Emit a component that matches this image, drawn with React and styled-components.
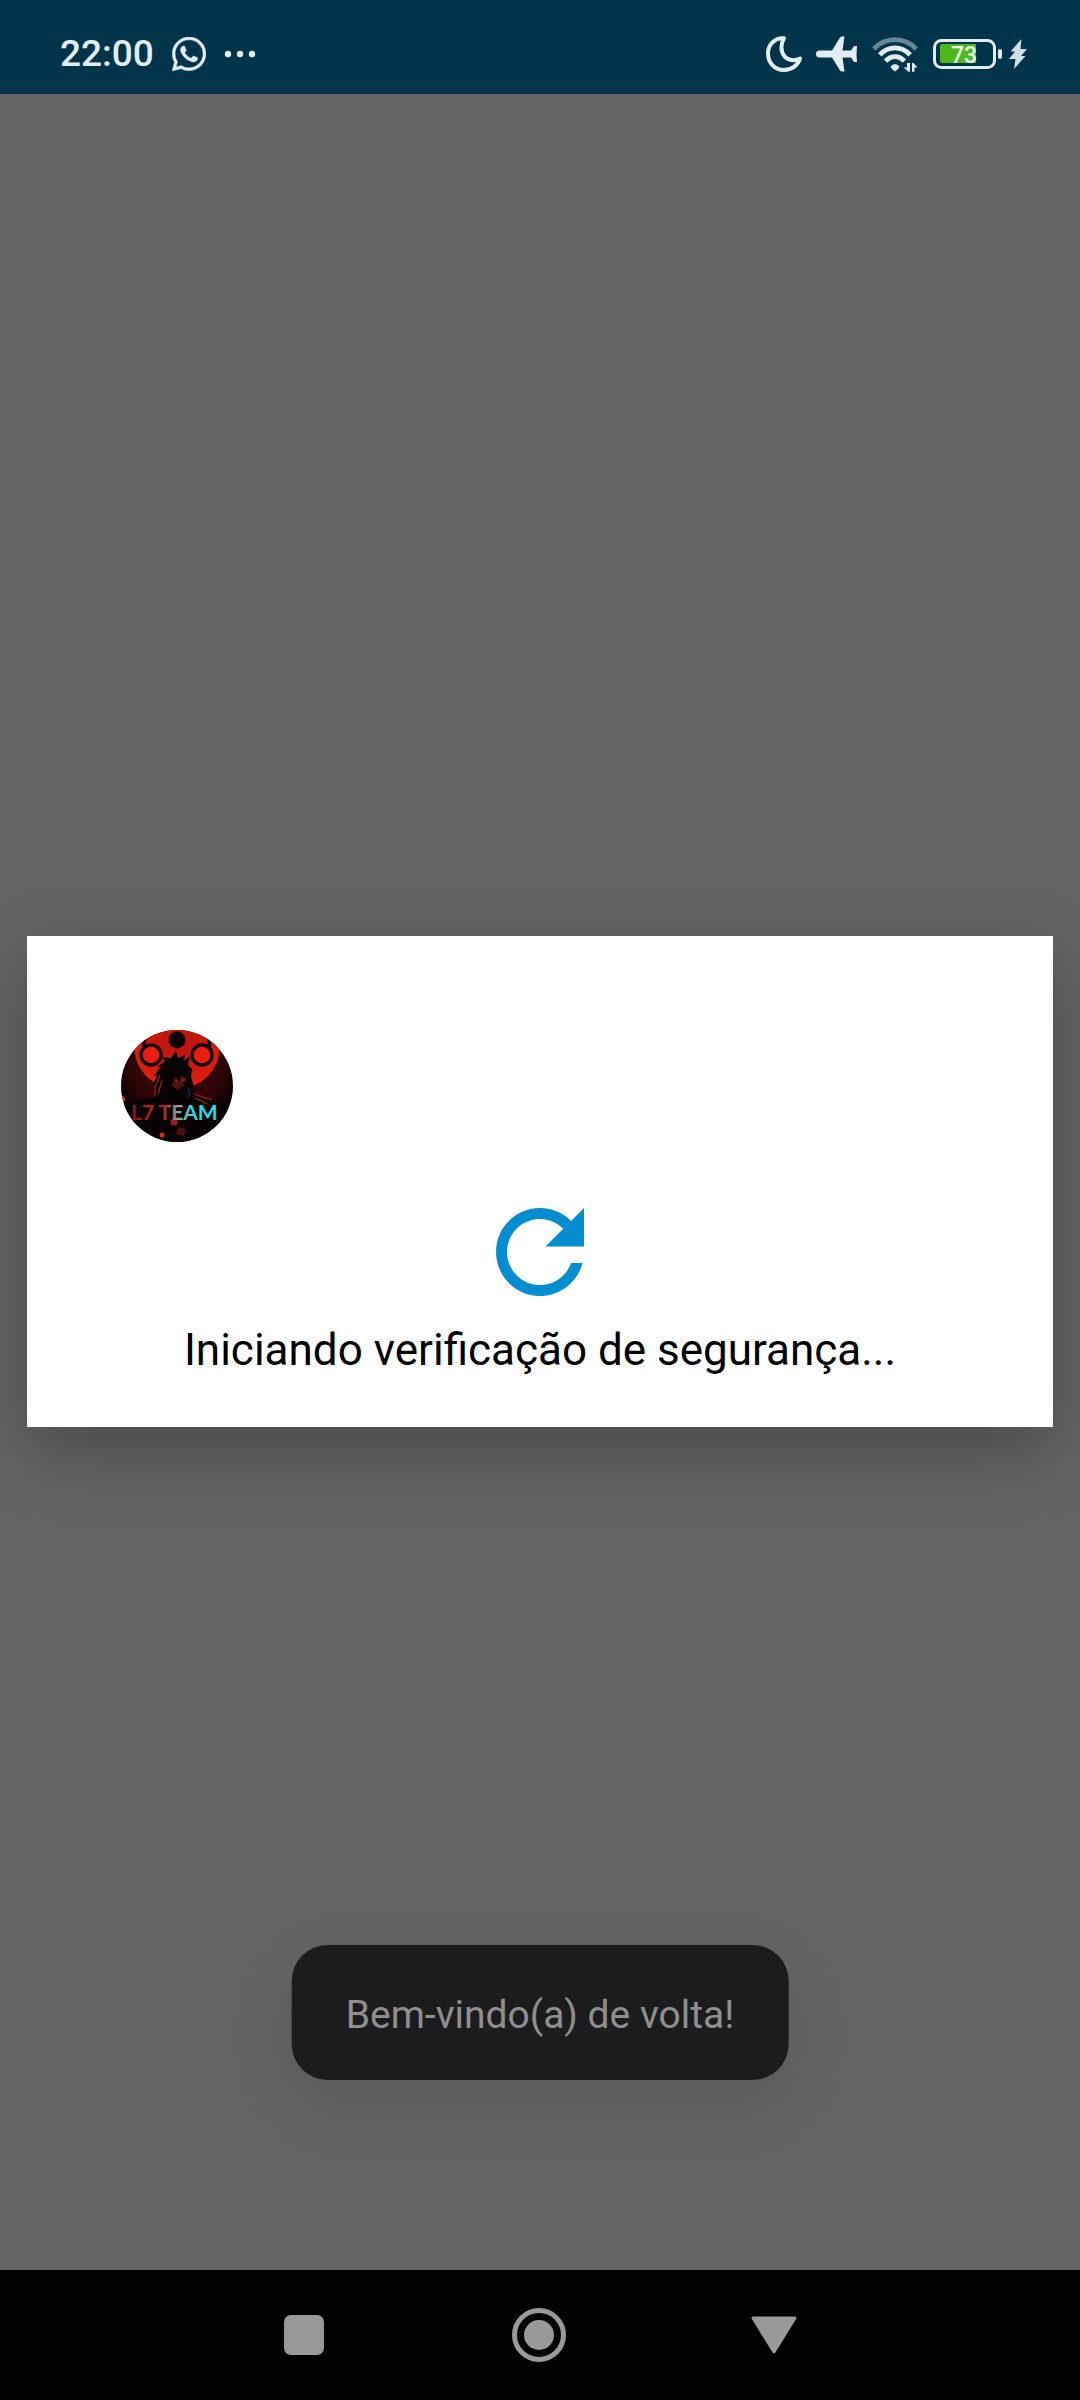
import React from "react";
import styled, { createGlobalStyle } from "styled-components";

const GlobalStyle = createGlobalStyle`
  *, *::before, *::after { box-sizing: border-box; }
  body { margin: 0; background: #646464; font-family: Roboto, "Noto Sans", sans-serif; }
`;

const Screen = styled.div`
  display: flex;
  flex-direction: column;
  min-height: 100vh;
  background: #646464;
`;

const StatusBar = styled.header`
  display: flex;
  justify-content: space-between;
  align-items: center;
  height: 94px;
  padding: 14px 53px 0 60px;
  background: #00344b;
  color: #e3edf3;
`;

const StatusGroup = styled.div`
  display: flex;
  align-items: center;
  gap: ${({ $gap }) => $gap}px;
`;

const Clock = styled.time`
  font-size: 37px;
  line-height: 44px;
  font-weight: 500;
`;

const Icon = styled.svg`
  display: block;
  flex: none;
  fill: currentColor;
`;

const BatteryGroup = styled.div`
  display: flex;
  align-items: center;
  gap: 7px;
  margin-left: 1px;
`;

const Main = styled.main`
  flex: 1;
  display: grid;
  grid-template-columns: minmax(0, 1fr);
  align-items: center;
  position: relative;
  padding: 0 27px 1px;
`;

const Dialog = styled.section`
  display: flex;
  flex-direction: column;
  padding: 94px 94px 51px;
  background: #fff;
  box-shadow: 0 24px 64px rgba(0, 0, 0, 0.26);
`;

const Avatar = styled.svg`
  display: block;
  width: 112px;
  height: 112px;
  border-radius: 50%;
`;

const Progress = styled.div`
  display: flex;
  flex-direction: column;
  align-items: center;
  gap: 6px;
  margin-top: 44px;
`;

const Message = styled.p`
  margin: 0;
  color: #000;
  font-size: 44px;
  line-height: 52px;
`;

const Toast = styled.div`
  position: absolute;
  left: 50%;
  bottom: 190px;
  transform: translateX(-50%);
  padding: 47px 54px 42px;
  border-radius: 36px;
  background: #1c1c1e;
  box-shadow: 0 24px 64px rgba(0, 0, 0, 0.1);
  color: #8f8f90;
  font-size: 39px;
  line-height: 46px;
  white-space: nowrap;
`;

const NavBar = styled.nav`
  display: flex;
  justify-content: center;
  height: 130px;
  padding-right: 2px;
  background: #000;
`;

const NavButton = styled.button`
  display: flex;
  align-items: center;
  justify-content: center;
  width: 235px;
  padding: 0;
  border: 0;
  background: none;
  color: #999;
`;

function WhatsApp() {
  return (
    <Icon width="34" height="34" viewBox="0 0 24 24" aria-label="WhatsApp">
      <path
        stroke="currentColor"
        strokeWidth=".3"
        d="M17.472 14.382c-.297-.149-1.758-.867-2.03-.967-.273-.099-.471-.148-.67.15-.197.297-.767.966-.94 1.164-.173.199-.347.223-.644.075-.297-.15-1.255-.463-2.39-1.475-.883-.788-1.48-1.761-1.653-2.059-.173-.297-.018-.458.13-.606.134-.133.298-.347.446-.52.149-.174.198-.298.298-.497.099-.198.05-.371-.025-.52-.075-.149-.669-1.612-.916-2.207-.242-.579-.487-.5-.669-.51-.173-.008-.371-.01-.57-.01-.198 0-.52.074-.792.372-.272.297-1.04 1.016-1.04 2.479 0 1.462 1.065 2.875 1.213 3.074.149.198 2.096 3.2 5.077 4.487.709.306 1.262.489 1.694.625.712.227 1.36.195 1.871.118.571-.085 1.758-.719 2.006-1.413.248-.694.248-1.289.173-1.413-.074-.124-.272-.198-.57-.347m-5.421 7.403h-.004a9.87 9.87 0 01-5.031-1.378l-.361-.214-3.741.982.998-3.648-.235-.374a9.86 9.86 0 01-1.51-5.26c.001-5.45 4.436-9.884 9.888-9.884 2.64 0 5.122 1.03 6.988 2.898a9.825 9.825 0 012.893 6.994c-.003 5.45-4.437 9.884-9.885 9.884m8.413-18.297A11.815 11.815 0 0012.05 0C5.495 0 .16 5.335.157 11.892c0 2.096.547 4.142 1.588 5.945L.057 24l6.305-1.654a11.882 11.882 0 005.683 1.448h.005c6.554 0 11.89-5.335 11.893-11.893a11.821 11.821 0 00-3.48-8.413z"
      />
    </Icon>
  );
}

function More() {
  return (
    <Icon width="32" height="8" viewBox="0 0 32 8" aria-label="Mais">
      <circle cx="4" cy="4" r="3.2" />
      <circle cx="16" cy="4" r="3.2" />
      <circle cx="28" cy="4" r="3.2" />
    </Icon>
  );
}

function Moon() {
  return (
    <Icon width="36" height="36" viewBox="0 0 36 36" aria-label="Modo noturno">
      <path
        d="M18 2.2C9.500 1.500 2 8 2 17.500C2 27 9 34 18 34C25.500 34 32 29.500 34 22.500C28.500 25.500 22 24.500 18.500 20.200C14.500 15.500 14.500 8 18 2.200Z"
        fill="none"
        stroke="currentColor"
        strokeWidth="4"
        strokeLinejoin="round"
      />
    </Icon>
  );
}

function Plane() {
  return (
    <Icon width="42" height="36" viewBox="0 0 42 36" aria-label="Modo avião">
      <path d="M3.500 14.500H16L24 1.500Q24.800.5 26 .5H28.500L26.500 14.500H35L38 10H41Q40 18 41 26H38L35 21.500H26.500L28.500 35.500H26Q24.800 35.500 24 34.500L16 21.500H3.500A3.500 3.500 0 0 1 3.500 14.500Z" />
    </Icon>
  );
}

function Wifi() {
  return (
    <Icon width="46" height="36" viewBox="0 0 46 36" aria-label="Wi-Fi">
      <g fill="none" stroke="currentColor" strokeWidth="4.800">
        <path d="M1.800 13C13.500 0.600 32.500 0.600 44.200 13" opacity=".45" />
        <path d="M7.800 18.800C16.500 9.600 29.500 9.600 38.200 18.800" />
        <path d="M13.600 25.200C19 19 27 19 32.400 25.200" />
      </g>
      <path d="M18.500 30.500Q23 25.500 27.500 30.500Q27 33 23 35.600Q19 33 18.500 30.500Z" />
      <path d="M35 27H38V35.800H36.500L31.500 31.500H35ZM40 35.800V27H41.500L45.500 31.500H42.500V35.800Z" />
    </Icon>
  );
}

function Battery() {
  return (
    <Icon width="69" height="30" viewBox="0 0 69 30" role="img" aria-label="Bateria 73%">
      <rect x="1.500" y="1.500" width="60" height="27" rx="7" fill="none" stroke="currentColor" strokeWidth="3" />
      <path d="M9 5H43V24H9Q7 24 7 22V7Q7 5 9 5Z" fill="#4cb81b" />
      <rect x="65" y="10" width="4" height="10" rx="2" />
      <text x="18" y="24" fontFamily="Roboto, sans-serif" fontSize="23" fontWeight="500" fill="#eef6e8">
        73
      </text>
    </Icon>
  );
}

function Bolt() {
  return (
    <Icon width="18" height="30" viewBox="0 0 18 30" aria-label="Carregando">
      <path d="M12.500 0L1.500 12.500H6L0 20H6.500L5 30L16.500 17H12L18 10H11.500Z" opacity=".92" />
    </Icon>
  );
}

function TeamAvatar() {
  return (
    <Avatar viewBox="0 0 112 112" role="img" aria-label="L7 TEAM">
      <defs>
        <radialGradient id="moonGlow" cx=".5" cy=".4" r=".6">
          <stop offset="0" stopColor="#b8140c" />
          <stop offset=".7" stopColor="#cf1a0e" />
          <stop offset="1" stopColor="#e0200f" />
        </radialGradient>
        <radialGradient id="backdrop" cx=".5" cy=".25" r=".6">
          <stop offset="0" stopColor="#500806" />
          <stop offset=".75" stopColor="#2a0404" />
          <stop offset="1" stopColor="#080204" />
        </radialGradient>
        <linearGradient id="teamInk" gradientUnits="userSpaceOnUse" x1="10" y1="0" x2="98" y2="0">
          <stop offset="0" stopColor="#7e1115" />
          <stop offset=".22" stopColor="#c11b1b" />
          <stop offset=".38" stopColor="#a92928" />
          <stop offset=".54" stopColor="#8ba3a3" />
          <stop offset=".7" stopColor="#2bd9e2" />
          <stop offset="1" stopColor="#14eaf2" />
        </linearGradient>
      </defs>
      <rect width="112" height="112" fill="url(#backdrop)" />
      <circle cx="56" cy="16" r="43" fill="url(#moonGlow)" />
      <g fill="none" stroke="#160304" strokeWidth="3.500">
        <circle cx="30" cy="25" r="10" fill="#ec1c0e" />
        <circle cx="81" cy="25" r="10" fill="#ec1c0e" />
        <path d="M23 17Q23 9 27 0M88 17Q90 8 83 1" />
      </g>
      <circle cx="56" cy="10" r="8.500" fill="#100304" />
      <path d="M33 68L35 54L31 57L36 45L33 46L40 36L36 37L44 31L41 27L50 28L55 21L57 28L64 25L63 31L69 26L67 35L71 39L70 47L74 60L73 65L88 72L112 78V112H0V75L30 68Z" fill="#080205" />
      <path d="M54 47L64 46L62 56L57 60L51 56Z" fill="#4b1213" />
      <path d="M53 50L58 49L56 52ZM61 49H64V51H60Z" fill="#a51a18" />
      <path d="M53 45L58 52L61 43L64 48L66 40L54 38Z" fill="#080205" />
      <path d="M34 66V57L39 45M37 64L41 50M73 64L91 70M74 68L86 74" fill="none" stroke="#a11a15" strokeWidth="1.300" />
      <path d="M67 58L69 64L66 68" fill="none" stroke="#24235e" strokeWidth="1.200" />
      <path d="M0 66Q5 66 4 71L1 73Z" fill="#d7352b" />
      <circle cx="53" cy="92" r="3.500" fill="#9c1b20" />
      <circle cx="41" cy="105" r="2.500" fill="#d12a24" />
      <path d="M57 97L65 99L63 106L55 104Z" fill="#4e1014" />
      <text x="10" y="90" fontFamily="Lato, sans-serif" fontSize="21" fontWeight="700" fill="url(#teamInk)">
        L7 TEAM
      </text>
    </Avatar>
  );
}

export default function App() {
  return (
    <>
      <GlobalStyle />
      <Screen>
        <StatusBar>
          <StatusGroup $gap={18}>
            <Clock>22:00</Clock>
            <WhatsApp />
            <More />
          </StatusGroup>
          <StatusGroup $gap={14}>
            <Moon />
            <Plane />
            <Wifi />
            <BatteryGroup>
              <Battery />
              <Bolt />
            </BatteryGroup>
          </StatusGroup>
        </StatusBar>
        <Main>
          <Dialog role="dialog" aria-label="Verificação de segurança">
            <TeamAvatar />
            <Progress>
              <Icon width="132" height="132" viewBox="0 0 24 24" color="#048dd0" aria-hidden="true">
                <path d="M17.650 6.350C16.200 4.900 14.210 4 12 4c-4.420 0-7.990 3.580-7.990 8s3.570 8 7.990 8c3.730 0 6.840-2.550 7.730-6h-2.080c-.820 2.330-3.040 4-5.650 4-3.310 0-6-2.690-6-6s2.690-6 6-6c1.660 0 3.140.690 4.220 1.780L13 11h7V4l-2.350 2.350z" />
              </Icon>
              <Message>Iniciando verificação de segurança...</Message>
            </Progress>
          </Dialog>
          <Toast role="status">Bem-vindo(a) de volta!</Toast>
        </Main>
        <NavBar aria-label="Sistema">
          <NavButton type="button" aria-label="Recentes">
            <Icon width="40" height="40" viewBox="0 0 40 40">
              <rect width="40" height="40" rx="7" />
            </Icon>
          </NavButton>
          <NavButton type="button" aria-label="Início">
            <Icon width="54" height="54" viewBox="0 0 54 54">
              <circle cx="27" cy="27" r="24.500" fill="none" stroke="currentColor" strokeWidth="5" />
              <circle cx="27" cy="27" r="15" />
            </Icon>
          </NavButton>
          <NavButton type="button" aria-label="Voltar">
            <Icon width="46" height="38" viewBox="0 0 46 38">
              <path d="M2 2H44L23 36Z" stroke="currentColor" strokeWidth="3" strokeLinejoin="round" />
            </Icon>
          </NavButton>
        </NavBar>
      </Screen>
    </>
  );
}
